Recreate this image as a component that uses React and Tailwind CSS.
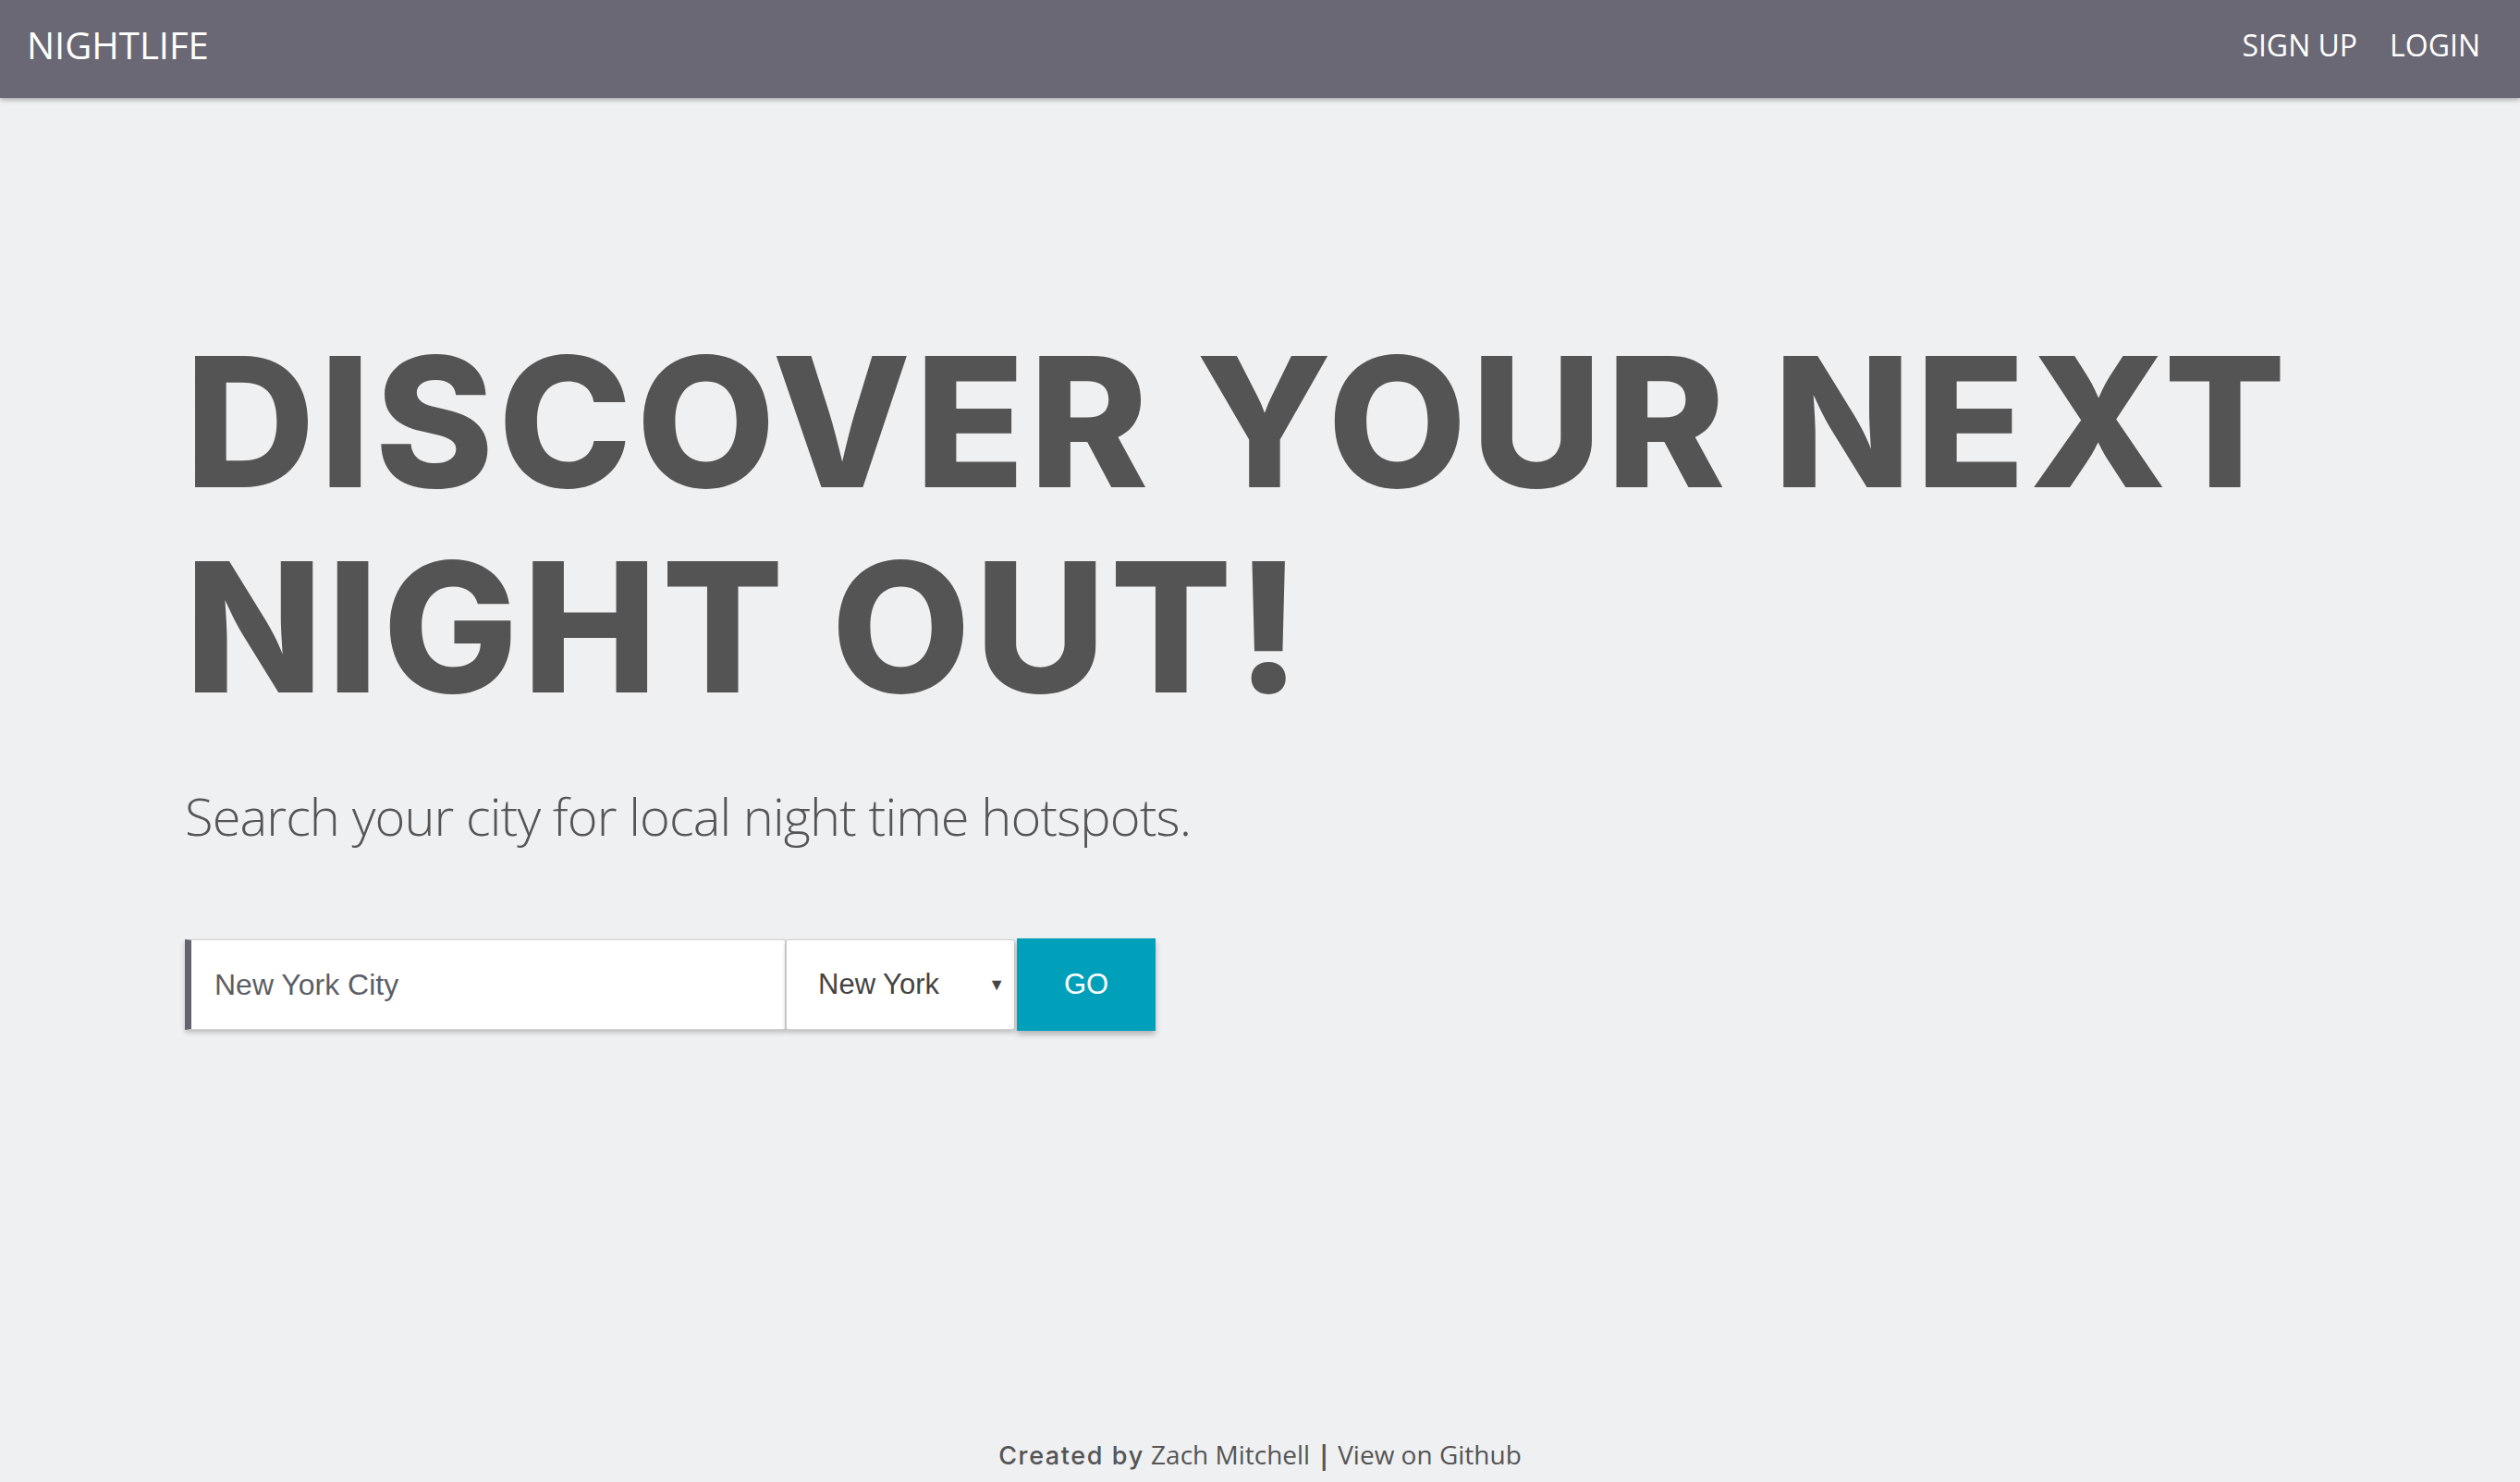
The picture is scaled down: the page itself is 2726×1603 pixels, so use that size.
import React from "react";

export default function App() {
  return (
    <div className="min-h-screen flex flex-col bg-[#eff0f2]">
      <nav className="h-[106px] shrink-0 bg-[#6a6874] flex justify-between pl-[29px] pr-[43px] shadow-[0_2px_5px_rgba(0,0,0,0.3)] relative z-10">
        <div className="mt-[29px] text-[40px] leading-none text-white font-['Open_Sans',sans-serif]">
          NIGHTLIFE
        </div>
        <div className="mt-[33px] flex gap-[35px] text-[32px] leading-none text-white font-['Open_Sans',sans-serif]">
          <span>SIGN UP</span>
          <span>LOGIN</span>
        </div>
      </nav>

      <main className="pl-[200px] pt-[239px]">
        <h1 className="text-[195px] leading-[222px] font-extrabold text-[#545454] font-['Inter',sans-serif] tracking-[4.5px]">
          DISCOVER YOUR NEXT
          <br />
          NIGHT OUT!
        </h1>
        <p className="mt-[59px] text-[56px] leading-[68px] font-light text-[#555] font-['Open_Sans',sans-serif] tracking-[-0.9px]">
          Search your city for local night time hotspots.
        </p>
        <div className="mt-[99px] flex h-[100px] font-['Liberation_Sans',Arial,sans-serif] text-[31px]">
          <div className="w-[650px] h-[98px] mt-[1px] bg-white border border-[#cfcfcf] border-l-[7px] border-l-[#65636d] flex items-center pl-[25px] text-[32px] text-[#5b5f68] shadow-[0_3px_5px_rgba(0,0,0,0.2)]">
            New York City
          </div>
          <div className="w-[248px] h-[98px] mt-[1px] bg-white border border-[#cfcfcf] rounded-[3px] flex items-center justify-between pl-[34px] pr-[10px] text-[#444] shadow-[0_3px_5px_rgba(0,0,0,0.2)]">
            <span>New York</span>
            <span className="text-[18px] text-[#444]">▼</span>
          </div>
          <div className="w-[150px] ml-[2px] bg-[#00a0ba] text-white flex items-center justify-center shadow-[0_4px_6px_rgba(0,0,0,0.25)]">
            GO
          </div>
        </div>
      </main>

      <footer className="mt-auto pb-[8px] text-center text-[28px] leading-[40px] text-[#555] font-['Open_Sans',sans-serif]">
        <span className="font-['Inter',sans-serif] font-medium text-[27px] tracking-[1.6px]">Created by</span>{" "}
        Zach Mitchell <span className="font-bold">|</span> View on Github
      </footer>
    </div>
  );
}
